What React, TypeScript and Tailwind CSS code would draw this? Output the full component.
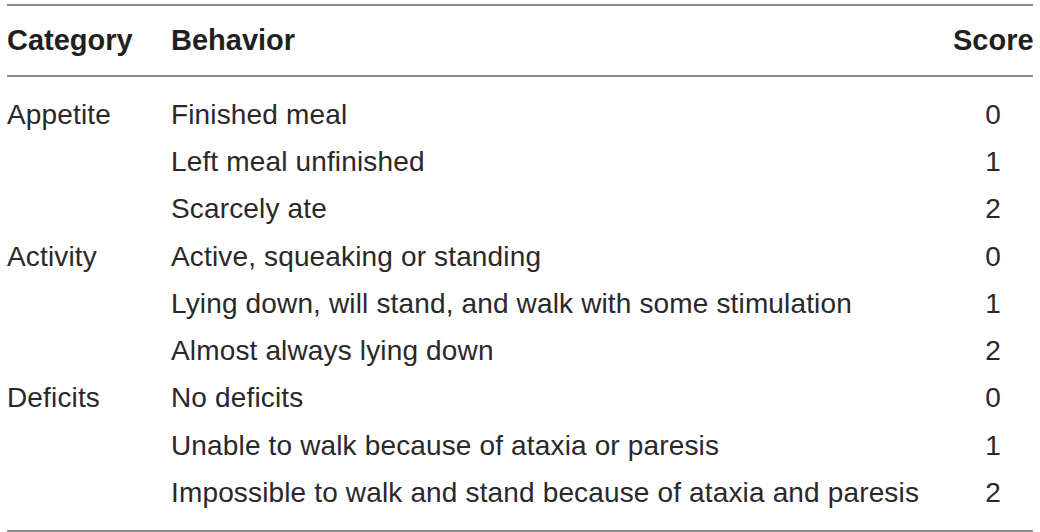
import React from "react";

const rows: [string, string, string][] = [
  ["Appetite", "Finished meal", "0"],
  ["", "Left meal unfinished", "1"],
  ["", "Scarcely ate", "2"],
  ["Activity", "Active, squeaking or standing", "0"],
  ["", "Lying down, will stand, and walk with some stimulation", "1"],
  ["", "Almost always lying down", "2"],
  ["Deficits", "No deficits", "0"],
  ["", "Unable to walk because of ataxia or paresis", "1"],
  ["", "Impossible to walk and stand because of ataxia and paresis", "2"],
];

export default function App() {
  return (
    <div
      className="w-[1040px] h-[532px] bg-white pt-[4px] px-[7px] text-[#231f20]"
      style={{ fontFamily: '"Liberation Sans", Arial, sans-serif' }}
    >
      <div className="border-t-2 border-b-2 border-[#8c8c8c]">
        <div className="flex items-center h-[71px] border-b-2 border-[#8c8c8c] text-[29px] font-bold pt-[1px]">
          <div className="w-[164px]">Category</div>
          <div className="flex-1">Behavior</div>
          <div className="w-[80px] text-right">Score</div>
        </div>
        <div className="pt-[14px] pb-[13px] text-[28px] tracking-[0.15px] text-[#2b2829]">
          {rows.map((r, i) => (
            <div key={i} className="flex h-[47.3px] items-center">
              <div className="w-[164px]">{r[0]}</div>
              <div className="flex-1">{r[1]}</div>
              <div className="w-[80px] text-center">{r[2]}</div>
            </div>
          ))}
        </div>
      </div>
    </div>
  );
}
